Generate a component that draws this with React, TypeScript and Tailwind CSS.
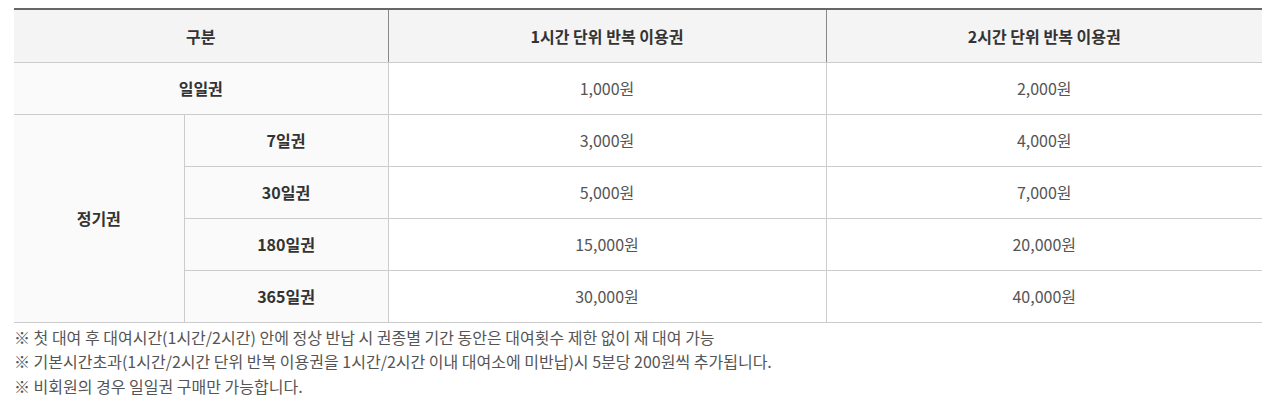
const ROWS = [
  { label: "7일권", one: "3,000원", two: "4,000원" },
  { label: "30일권", one: "5,000원", two: "7,000원" },
  { label: "180일권", one: "15,000원", two: "20,000원" },
  { label: "365일권", one: "30,000원", two: "40,000원" },
];

const NOTES = [
  "※ 첫 대여 후 대여시간(1시간/2시간) 안에 정상 반납 시 권종별 기간 동안은 대여횟수 제한 없이 재 대여 가능",
  "※ 기본시간초과(1시간/2시간 단위 반복 이용권을 1시간/2시간 이내 대여소에 미반납)시 5분당 200원씩 추가됩니다.",
  "※ 비회원의 경우 일일권 구매만 가능합니다.",
];

export default function App() {
  return (
    <div
      className="bg-white pt-[8px] pl-[14px] pr-[18px] text-[16px] text-[#555]"
      style={{ fontFamily: '"Noto Sans CJK KR", "Noto Sans", sans-serif' }}
    >
      <table className="w-[1248px] table-fixed border-collapse border-t-2 border-[#666] text-center">
        <colgroup>
          <col className="w-[170px]" />
          <col className="w-[204px]" />
          <col className="w-[438px]" />
          <col className="w-[436px]" />
        </colgroup>
        <thead>
          <tr className="h-[53px] bg-[#f4f4f4]">
            <th colSpan={2} className="border-b border-r border-b-[#ccc] border-r-[#888] font-bold text-[#333]">
              구분
            </th>
            <th className="border-b border-r border-b-[#ccc] border-r-[#888] font-bold text-[#333]">
              1시간 단위 반복 이용권
            </th>
            <th className="border-b border-[#ccc] font-bold text-[#333]">2시간 단위 반복 이용권</th>
          </tr>
        </thead>
        <tbody>
          <tr className="h-[52px]">
            <th colSpan={2} className="border-b border-r border-[#ccc] bg-[#fafafa] font-bold text-[#333]">
              일일권
            </th>
            <td className="border-b border-r border-[#ccc]">1,000원</td>
            <td className="border-b border-[#ccc]">2,000원</td>
          </tr>
          {ROWS.map((row, i) => (
            <tr key={row.label} className="h-[52px]">
              {i === 0 && (
                <th rowSpan={4} className="border-b border-r border-[#ccc] bg-[#fafafa] font-bold text-[#333]">
                  정기권
                </th>
              )}
              <th className="border-b border-r border-[#ccc] bg-[#fafafa] font-bold text-[#333]">{row.label}</th>
              <td className="border-b border-r border-[#ccc]">{row.one}</td>
              <td className="border-b border-[#ccc]">{row.two}</td>
            </tr>
          ))}
        </tbody>
      </table>
      <ul className="pt-[2px] text-[16px] leading-[24.7px]">
        {NOTES.map((n) => (
          <li key={n}>{n}</li>
        ))}
      </ul>
    </div>
  );
}
